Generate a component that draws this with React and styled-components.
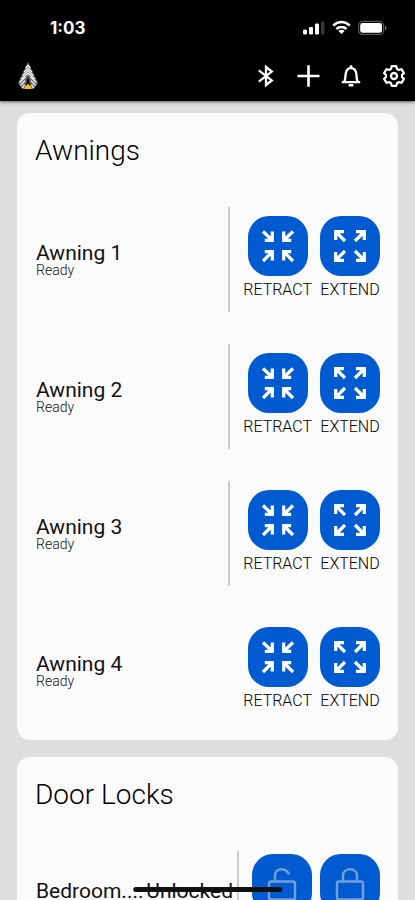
import React from 'react';
import styled, { createGlobalStyle } from 'styled-components';

const GlobalStyle = createGlobalStyle`
  * {
    box-sizing: border-box;
  }

  body {
    margin: 0;
    background-color: #dedede;
    font-family: Roboto, 'Liberation Sans', sans-serif;
    color: #111;
  }
`;

const Screen = styled.div`
  position: relative;
  display: flex;
  flex-direction: column;
  height: 100vh;
  overflow: hidden;
`;

const Header = styled.header`
  flex: none;
  background-color: #000;
  color: #fff;
  box-shadow: 0 1px 3px rgba(0, 0, 0, 0.6);
`;

const StatusBar = styled.div`
  display: flex;
  align-items: center;
  justify-content: space-between;
  height: 56px;
  padding: 0 28px 0 50px;
`;

const Clock = styled.time`
  font-family: Inter, 'Liberation Sans', sans-serif;
  font-size: 17px;
  font-weight: 700;
  line-height: 20px;
`;

const StatusIcons = styled.div`
  display: flex;
  align-items: center;
  gap: 7px;
`;

const NavBar = styled.nav`
  display: flex;
  align-items: center;
  justify-content: space-between;
  height: 45px;
  padding: 0 9px 5px 16px;
`;

const NavActions = styled.div`
  display: flex;
  gap: 19px;
`;

const NavButton = styled.button`
  display: flex;
  padding: 0;
  border: none;
  background: none;
  color: #fff;
  cursor: pointer;
`;

const Content = styled.main`
  flex: 1;
  min-height: 0;
  display: flex;
  flex-direction: column;
  gap: 17px;
  padding: 12px 17px;
  overflow: hidden;
`;

const Card = styled.section`
  flex: none;
  padding: 20px 18px 17px;
  border-radius: 13px;
  background-color: #fbfbfb;
`;

const CardTitle = styled.h2`
  margin: 0 0 38px;
  color: #000;
  font-size: 28px;
  font-weight: 300;
  line-height: 36px;
`;

const Rows = styled.div`
  display: flex;
  flex-direction: column;
  gap: 32px;
`;

const Row = styled.div`
  display: flex;
  align-items: stretch;
  height: ${props => (props.$compact ? '80px' : '105px')};
`;

const RowInfo = styled.div`
  flex: 1;
  min-width: 0;
  display: flex;
  flex-direction: ${props => (props.$inline ? 'row' : 'column')};
  justify-content: ${props => (props.$inline ? 'space-between' : 'center')};
  align-items: ${props => (props.$inline ? 'center' : 'flex-start')};
  padding: 0 4px 0 1px;
`;

const RowName = styled.div`
  font-size: 21px;
  line-height: 20px;
  white-space: nowrap;
`;

const RowStatus = styled.div`
  font-size: 14px;
  font-weight: 300;
  line-height: 14px;
`;

const Controls = styled.div`
  display: flex;
  gap: 8px;
  padding: ${props => (props.$compact ? '3px 0 0 13px' : '9px 0 0 13px')};
  border-left: 2px solid ${props => (props.$divider ? '#cccccc' : 'transparent')};
`;

const ControlButton = styled.button`
  display: flex;
  flex-direction: column;
  align-items: center;
  gap: 4px;
  padding: 0;
  border: none;
  background: none;
  color: #000;
  font-family: inherit;
  font-size: 16px;
  font-weight: 300;
  line-height: 20px;
  cursor: pointer;
`;

const Tile = styled.span`
  display: flex;
  width: 60px;
  height: 60px;
  border-radius: 21px;
  background-color: #005bd0;
  color: ${props => (props.$dim ? '#739fd8' : '#fff')};
`;

const HomeIndicator = styled.div`
  position: absolute;
  bottom: 8px;
  left: 50%;
  width: 36%;
  height: 5px;
  border-radius: 3px;
  background-color: #111;
  transform: translateX(-50%);
`;

const SignalIcon = () => (
  <svg width="22" height="16" viewBox="0 0 22 16" fill="#fff" aria-hidden="true">
    <rect x="0" y="9.5" width="4" height="5" rx="1.5" />
    <rect x="6" y="7" width="4" height="7.5" rx="1.3" />
    <rect x="12" y="3.5" width="4" height="11" rx="1.3" />
    <rect x="18" y="1.5" width="3.5" height="13" rx="1.3" opacity="0.22" />
  </svg>
);

const WifiIcon = () => (
  <svg width="19" height="16" viewBox="0 0 19 16" aria-hidden="true">
    <g fill="none" stroke="#fff" strokeWidth="2.5">
      <path d="M1.3 5.6C6 .9 13 .9 17.7 5.6" />
      <path d="M4.4 9C7.3 6.2 11.7 6.2 14.6 9" />
    </g>
    <path d="M9.5 14 6.3 10.9C8.2 9.3 10.8 9.3 12.7 10.9Z" fill="#fff" />
  </svg>
);

const BatteryIcon = () => (
  <svg width="29" height="16" viewBox="0 0 29 16" aria-hidden="true">
    <rect x="0.6" y="1.4" width="25" height="13" rx="4" fill="none" stroke="#555" strokeWidth="1.2" />
    <rect x="2.2" y="3" width="21.8" height="9.8" rx="2.4" fill="#fff" />
    <path d="M27 5.6C28.8 6.4 28.8 9.4 27 10.2Z" fill="#777" />
  </svg>
);

const Logo = () => (
  <svg width="24" height="30" viewBox="0 0 24 30" aria-hidden="true">
    <path d="M12 1 22 22 17.5 28H6.5L2 22Z" fill="#666" />
    <g fill="none" stroke="#eee" strokeWidth="1.5">
      <path d="M9.5 7 12 4.5 14.5 7" />
      <path d="M8 11 12 7.5 16 11" />
      <path d="M6.5 14.5 12 10 17.5 14.5" />
      <path d="M5 18 12 12.5 19 18" />
      <path d="M3.5 21.5 9.5 16M20.5 21.5 14.5 16" />
      <path d="M4.3 24.5 9 19.8M19.7 24.5 15 19.8" />
      <path d="M6.2 27 8.5 24M17.8 27 15.5 24" />
    </g>
    <path d="M12 15 15 28H9Z" fill="#000" />
    <path d="M12 22 13.2 24.5H14.6L15.6 28H8.4L9.4 24.5H10.8Z" fill="#f5c400" />
  </svg>
);

const NavIcon = ({ children }) => (
  <svg
    width="24"
    height="24"
    viewBox="0 0 24 24"
    fill="none"
    stroke="currentColor"
    strokeWidth="2.3"
    aria-hidden="true"
  >
    {children}
  </svg>
);

const BluetoothIcon = () => (
  <NavIcon>
    <path d="M5.8 6.4 18.8 16.4 13 21V3L18.8 7.6 5.8 17.6" />
  </NavIcon>
);

const PlusIcon = () => (
  <NavIcon>
    <path d="M12.5 1.2V22.8M1.5 12H23.5" strokeWidth="2.6" />
  </NavIcon>
);

const BellIcon = () => (
  <NavIcon>
    <path d="M2.8 18.2H21.2M5.2 18C6.5 15.5 6.3 13 6.6 10.5C7 6.5 9 4.2 12 4.2S17 6.5 17.4 10.5C17.7 13 17.5 15.5 18.8 18" />
    <path d="M12 1.2V4.2M9.6 21.3H14.4" strokeWidth="2.6" />
  </NavIcon>
);

const GearIcon = () => (
  <NavIcon>
    <path
      d="M9.7 2.2H14.3L15 4.9Q16 5.3 16.8 5.9L19.6 5.2 21.9 9.1 20 11Q20.1 12 20 13L21.9 14.9 19.6 18.8 16.8 18.1Q16 18.7 15 19.1L14.3 21.8H9.7L9 19.1Q8 18.7 7.2 18.1L4.4 18.8 2.1 14.9 4 13Q3.9 12 4 11L2.1 9.1 4.4 5.2 7.2 5.9Q8 5.3 9 4.9Z"
      strokeLinejoin="round"
      strokeWidth="2.2"
    />
    <circle cx="12" cy="12" r="3" />
  </NavIcon>
);

const TileIcon = ({ children, strokeWidth }) => (
  <svg
    width="60"
    height="60"
    viewBox="0 0 60 60"
    fill="none"
    stroke="currentColor"
    strokeWidth={strokeWidth}
    aria-hidden="true"
  >
    {children}
  </svg>
);

const RetractIcon = () => (
  <TileIcon strokeWidth="3.2">
    <path d="M15 15.5 24 24M16.8 24.3H24.3V15.5" />
    <path d="M45 15.5 36 24M43.2 24.3H35.7V15.5" />
    <path d="M15 45 24 36M16.8 35.7H24.3V44.5" />
    <path d="M45 45 36 36M43.2 35.7H35.7V44.5" />
  </TileIcon>
);

const ExtendIcon = () => (
  <TileIcon strokeWidth="3.2">
    <path d="M25 25 16 16M24 15.7H15.7V24" />
    <path d="M35 25 44 16M36 15.7H44.3V24" />
    <path d="M25 35 16 44M24 44.3H15.7V36" />
    <path d="M35 35 44 44M36 44.3H44.3V36" />
  </TileIcon>
);

const UnlockIcon = () => (
  <TileIcon strokeWidth="2.4">
    <rect x="17" y="27.5" width="26" height="18" rx="2" />
    <path d="M23 27.5V22C23 13.5 34 13 37 20.5" />
  </TileIcon>
);

const LockIcon = () => (
  <TileIcon strokeWidth="2.4">
    <rect x="17" y="27.5" width="26" height="18" rx="2" />
    <path d="M23 27.5V22C23 13 37 13 37 22V27.5" />
  </TileIcon>
);

const awnings = [
  { name: 'Awning 1', status: 'Ready' },
  { name: 'Awning 2', status: 'Ready' },
  { name: 'Awning 3', status: 'Ready' },
  { name: 'Awning 4', status: 'Ready' },
];

const AwningRow = ({ name, status, divider }) => (
  <Row>
    <RowInfo>
      <RowName>{name}</RowName>
      <RowStatus>{status}</RowStatus>
    </RowInfo>
    <Controls $divider={divider}>
      <ControlButton type="button">
        <Tile><RetractIcon /></Tile>
        RETRACT
      </ControlButton>
      <ControlButton type="button">
        <Tile><ExtendIcon /></Tile>
        EXTEND
      </ControlButton>
    </Controls>
  </Row>
);

const App = () => (
  <>
    <GlobalStyle />
    <Screen>
      <Header>
        <StatusBar>
          <Clock>1:03</Clock>
          <StatusIcons>
            <SignalIcon />
            <WifiIcon />
            <BatteryIcon />
          </StatusIcons>
        </StatusBar>
        <NavBar>
          <Logo />
          <NavActions>
            <NavButton type="button" aria-label="Bluetooth"><BluetoothIcon /></NavButton>
            <NavButton type="button" aria-label="Add"><PlusIcon /></NavButton>
            <NavButton type="button" aria-label="Notifications"><BellIcon /></NavButton>
            <NavButton type="button" aria-label="Settings"><GearIcon /></NavButton>
          </NavActions>
        </NavBar>
      </Header>
      <Content>
        <Card>
          <CardTitle>Awnings</CardTitle>
          <Rows>
            {awnings.map((item, index) => (
              <AwningRow key={item.name} {...item} divider={index < awnings.length - 1} />
            ))}
          </Rows>
        </Card>
        <Card>
          <CardTitle>Door Locks</CardTitle>
          <Row $compact>
            <RowInfo $inline>
              <RowName>Bedroom....</RowName>
              <RowName>Unlocked</RowName>
            </RowInfo>
            <Controls $compact $divider>
              <ControlButton type="button" aria-label="Unlock">
                <Tile $dim><UnlockIcon /></Tile>
              </ControlButton>
              <ControlButton type="button" aria-label="Lock">
                <Tile $dim><LockIcon /></Tile>
              </ControlButton>
            </Controls>
          </Row>
        </Card>
      </Content>
      <HomeIndicator />
    </Screen>
  </>
);

export default App;
